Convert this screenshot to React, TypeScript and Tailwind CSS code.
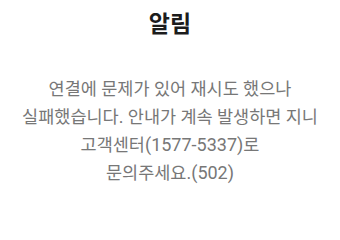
const sans = "font-['Roboto','Noto_Sans_CJK_KR',sans-serif]";

function Latin({ children }: { children: React.ReactNode }) {
  // digits and brackets are drawn a little larger than the hangul
  return <span className="text-[18px]">{children}</span>;
}

export default function App() {
  return (
    <div className={`flex h-[200px] w-[340px] flex-col items-center bg-white ${sans}`}>
      <h1 className="pt-[9px] text-[23px] leading-[32px] font-bold text-[#1c1c1c]">알림</h1>
      <div className="mt-[35px] flex flex-col items-center text-[17.5px] leading-[27px] text-[#777777]">
        <p>연결에 문제가 있어 재시도 했으나</p>
        <p>
          실패했습니다<Latin>.</Latin> 안내가 계속 발생하면 지니
        </p>
        <p>
          고객센터<Latin>(1577-5337)</Latin>로
        </p>
        <p>
          문의주세요<Latin>.(502)</Latin>
        </p>
      </div>
    </div>
  );
}
